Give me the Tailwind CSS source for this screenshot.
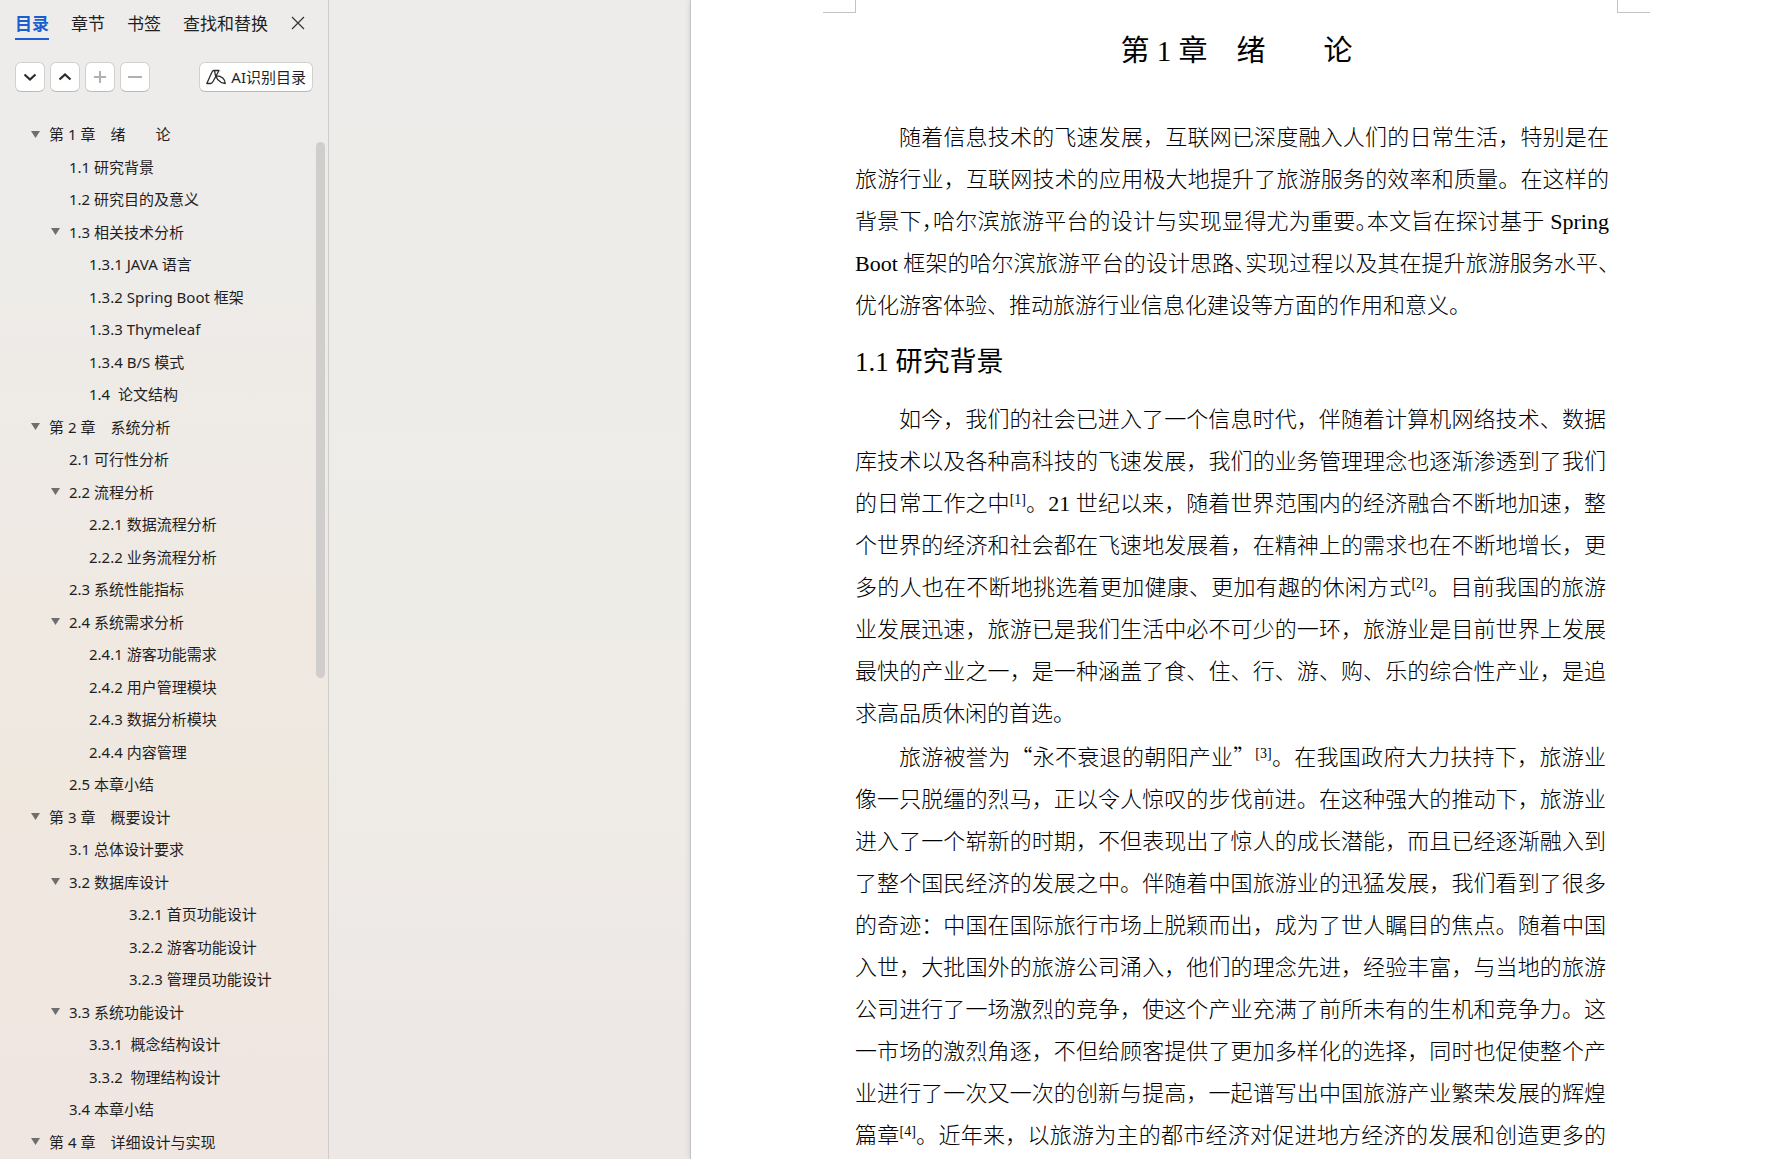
<!DOCTYPE html>
<html lang="zh-CN">
<head>
  <meta charset="UTF-8" />
  <meta name="viewport" content="width=device-width, initial-scale=1.0"/>
  <title>第 1 章 绪论</title>
  <script src="https://cdn.jsdelivr.net/npm/@tailwindcss/browser@4"></script>
</head>
<body class="h-screen overflow-hidden flex font-['Noto_Sans','Noto_Sans_CJK_SC',sans-serif] text-[#1f1f1f]">

  <!-- Navigation pane -->
  <aside class="relative w-[329px] shrink-0 h-full flex flex-col border-r border-[#cfcdcb] bg-linear-to-b from-[#edeceb] from-10% via-[#f0e8df] via-70% to-[#efe6e2] to-100%">
    <div class="flex items-start gap-[22px] pl-[15px] pt-3 text-[17px] leading-6">
      <button class="h-[28px] pb-[2px] border-b-2 border-[#1a5fd0] font-bold text-[#1a5fd0]">目录</button>
      <button>章节</button>
      <button>书签</button>
      <button>查找和替换</button>
      <button class="pt-[3px]" aria-label="关闭">
        <svg class="w-4 h-4" viewBox="0 0 16 16" fill="none" stroke="#333" stroke-width="1.2"><path d="M2 2l12 12M14 2l-12 12"/></svg>
      </button>
    </div>

    <div class="flex items-center gap-[5px] px-[15px] mt-[22px]">
      <button class="w-[30px] h-[30px] flex items-center justify-center rounded-md bg-white border border-[#d2d0ce] border-b-[#bdbbb9]" aria-label="展开">
        <svg class="w-4 h-4" viewBox="0 0 16 16" fill="none" stroke="#2b2b2b" stroke-width="2.2"><path d="M2.5 5.5L8 10.5l5.5-5"/></svg>
      </button>
      <button class="w-[30px] h-[30px] flex items-center justify-center rounded-md bg-white border border-[#d2d0ce] border-b-[#bdbbb9]" aria-label="收起">
        <svg class="w-4 h-4" viewBox="0 0 16 16" fill="none" stroke="#2b2b2b" stroke-width="2.2"><path d="M2.5 10.5L8 5.5l5.5 5"/></svg>
      </button>
      <button class="w-[30px] h-[30px] flex items-center justify-center rounded-md bg-white border border-[#d2d0ce] border-b-[#bdbbb9]" aria-label="升级">
        <svg class="w-4 h-4" viewBox="0 0 16 16" fill="none" stroke="#b0b0b0" stroke-width="2"><path d="M2 8h12M8 2v12"/></svg>
      </button>
      <button class="w-[30px] h-[30px] flex items-center justify-center rounded-md bg-white border border-[#d2d0ce] border-b-[#bdbbb9]" aria-label="降级">
        <svg class="w-4 h-4" viewBox="0 0 16 16" fill="none" stroke="#b0b0b0" stroke-width="2"><path d="M1 8h14"/></svg>
      </button>
      <button class="ml-auto h-[30px] flex items-center gap-[5px] px-[6px] rounded-md bg-white border border-[#d2d0ce] border-b-[#bdbbb9] text-[15px] whitespace-nowrap">
        <svg class="w-5 h-5" viewBox="0 0 20 20" fill="none" stroke="#2b2b2b" stroke-width="1.3" stroke-linejoin="round"><path d="M.8 16.500L6 5Q6.700 3.500 8 3.500H13L7 14.500Q6 16.500 4.500 16.500ZM8.500 3.500C9 9.500 12 15.500 19.200 16.500C19.200 12 15.500 8.800 10.500 8.800"/></svg>
        AI识别目录
      </button>
    </div>

    <ul id="outline" class="flex-1 mt-[26px] pb-px flex flex-col text-[15px] whitespace-pre"></ul>

    <div class="absolute right-[3px] top-[142px] w-[9px] h-[536px] rounded-full bg-[#d0cecc]"></div>
  </aside>

  <!-- Empty workspace left of the page -->
  <div class="w-[361px] shrink-0 bg-linear-to-b from-[#edecea] from-10% via-[#efece7] via-60% to-[#ede8e6] to-90%"></div>

  <!-- Document page -->
  <main class="relative flex-1 h-full overflow-hidden bg-white border-l border-[#c4c3c5] shadow-[0_0_6px_rgba(0,0,0,0.12)] font-['Liberation_Serif','Noto_Sans_CJK_SC',serif] text-black">
    <div class="flex justify-between h-[13px] pl-[132px] pr-[130px]">
      <div class="w-[33px] border-r border-b border-[#c3c3c3]"></div>
      <div class="w-[33px] border-l border-b border-[#c3c3c3]"></div>
    </div>
    <article class="pl-[164px] pr-[162px] text-[22px] leading-[42px]">
      <h1 class="pt-[17px] pb-[45px] text-center text-[29px] whitespace-pre">第 1 章　绪　　论</h1>
      <p class="indent-[44px] pr-[9px] font-light text-justify">随着信息技术的飞速发展，互联网已深度融入人们的日常生活，特别是在旅游行业，互联网技术的应用极大地提升了旅游服务的效率和质量。在这样的背景下<span class="[font-feature-settings:'halt']">，</span>哈尔滨旅游平台的设计与实现显得尤为重要<span class="[font-feature-settings:'halt']">。</span>本文旨在探讨基于 Spring Boot 框架的哈尔滨旅游平台的设计思路<span class="[font-feature-settings:'halt']">、</span>实现过程以及其在提升旅游服务水平<span class="[font-feature-settings:'halt']">、</span>优化游客体验、推动旅游行业信息化建设等方面的作用和意义。</p>
      <h2 class="pb-[2px] text-[27px] leading-[70px]">1.1 研究背景</h2>
      <p class="indent-[44px] pr-3 font-light text-justify">如今，我们的社会已进入了一个信息时代，伴随着计算机网络技术、数据库技术以及各种高科技的飞速发展，我们的业务管理理念也逐渐渗透到了我们的日常工作之中<sup class="text-[14px]">[1]</sup>。21 世纪以来，随着世界范围内的经济融合不断地加速，整个世界的经济和社会都在飞速地发展着，在精神上的需求也在不断地增长，更多的人也在不断地挑选着更加健康、更加有趣的休闲方式<sup class="text-[14px]">[2]</sup>。目前我国的旅游业发展迅速，旅游已是我们生活中必不可少的一环，旅游业是目前世界上发展最快的产业之一，是一种涵盖了食、住、行、游、购、乐的综合性产业，是追求高品质休闲的首选。</p>
      <p class="mt-[2px] indent-[44px] pr-3 font-light text-justify [text-align-last:justify]">旅游被誉为<span class="leading-none font-['Noto_Sans_CJK_SC',sans-serif]">“</span>永不衰退的朝阳产业<span class="leading-none font-['Noto_Sans_CJK_SC',sans-serif]">”</span><sup class="text-[14px]">[3]</sup>。在我国政府大力扶持下，旅游业像一只脱缰的烈马，正以令人惊叹的步伐前进。在这种强大的推动下，旅游业进入了一个崭新的时期，不但表现出了惊人的成长潜能，而且已经逐渐融入到了整个国民经济的发展之中。伴随着中国旅游业的迅猛发展，我们看到了很多的奇迹：中国在国际旅行市场上脱颖而出，成为了世人瞩目的焦点。随着中国入世，大批国外的旅游公司涌入，他们的理念先进，经验丰富，与当地的旅游公司进行了一场激烈的竞争，使这个产业充满了前所未有的生机和竞争力。这一市场的激烈角逐，不但给顾客提供了更加多样化的选择，同时也促使整个产业进行了一次又一次的创新与提高，一起谱写出中国旅游产业繁荣发展的辉煌篇章<sup class="text-[14px]">[4]</sup>。近年来，以旅游为主的都市经济对促进地方经济的发展和创造更多的</p>
    </article>
  </main>

  <script>
    // level sets the indent, open draws the triangle
    const outline = [
      { level: 1, open: true, title: "第 1 章　绪　　论" },
      { level: 2, title: "1.1 研究背景" },
      { level: 2, title: "1.2 研究目的及意义" },
      { level: 2, open: true, title: "1.3 相关技术分析" },
      { level: 3, title: "1.3.1 JAVA 语言" },
      { level: 3, title: "1.3.2 Spring Boot 框架" },
      { level: 3, title: "1.3.3 Thymeleaf" },
      { level: 3, title: "1.3.4 B/S 模式" },
      { level: 3, title: "1.4  论文结构" },
      { level: 1, open: true, title: "第 2 章　系统分析" },
      { level: 2, title: "2.1 可行性分析" },
      { level: 2, open: true, title: "2.2 流程分析" },
      { level: 3, title: "2.2.1 数据流程分析" },
      { level: 3, title: "2.2.2 业务流程分析" },
      { level: 2, title: "2.3 系统性能指标" },
      { level: 2, open: true, title: "2.4 系统需求分析" },
      { level: 3, title: "2.4.1 游客功能需求" },
      { level: 3, title: "2.4.2 用户管理模块" },
      { level: 3, title: "2.4.3 数据分析模块" },
      { level: 3, title: "2.4.4 内容管理" },
      { level: 2, title: "2.5 本章小结" },
      { level: 1, open: true, title: "第 3 章　概要设计" },
      { level: 2, title: "3.1 总体设计要求" },
      { level: 2, open: true, title: "3.2 数据库设计" },
      { level: 5, title: "3.2.1 首页功能设计" },
      { level: 5, title: "3.2.2 游客功能设计" },
      { level: 5, title: "3.2.3 管理员功能设计" },
      { level: 2, open: true, title: "3.3 系统功能设计" },
      { level: 3, title: "3.3.1  概念结构设计" },
      { level: 3, title: "3.3.2  物理结构设计" },
      { level: 2, title: "3.4 本章小结" },
      { level: 1, open: true, title: "第 4 章　详细设计与实现" },
    ];

    const indents = { 1: "pl-[31px]", 2: "pl-[51px]", 3: "pl-[71px]", 5: "pl-[111px]" };

    document.getElementById("outline").innerHTML = outline.map(item => `
      <li class="flex-1 min-h-8 flex items-center ${indents[item.level]}"><span class="w-[18px] shrink-0">${item.open
        ? '<svg class="w-[9px] h-[7px]" viewBox="0 0 9 7" fill="#6e6e6e"><path d="M0 0h9L4.5 7z"/></svg>'
        : ''}</span><a href="#">${item.title}</a></li>`).join("");
  </script>
</body>
</html>
